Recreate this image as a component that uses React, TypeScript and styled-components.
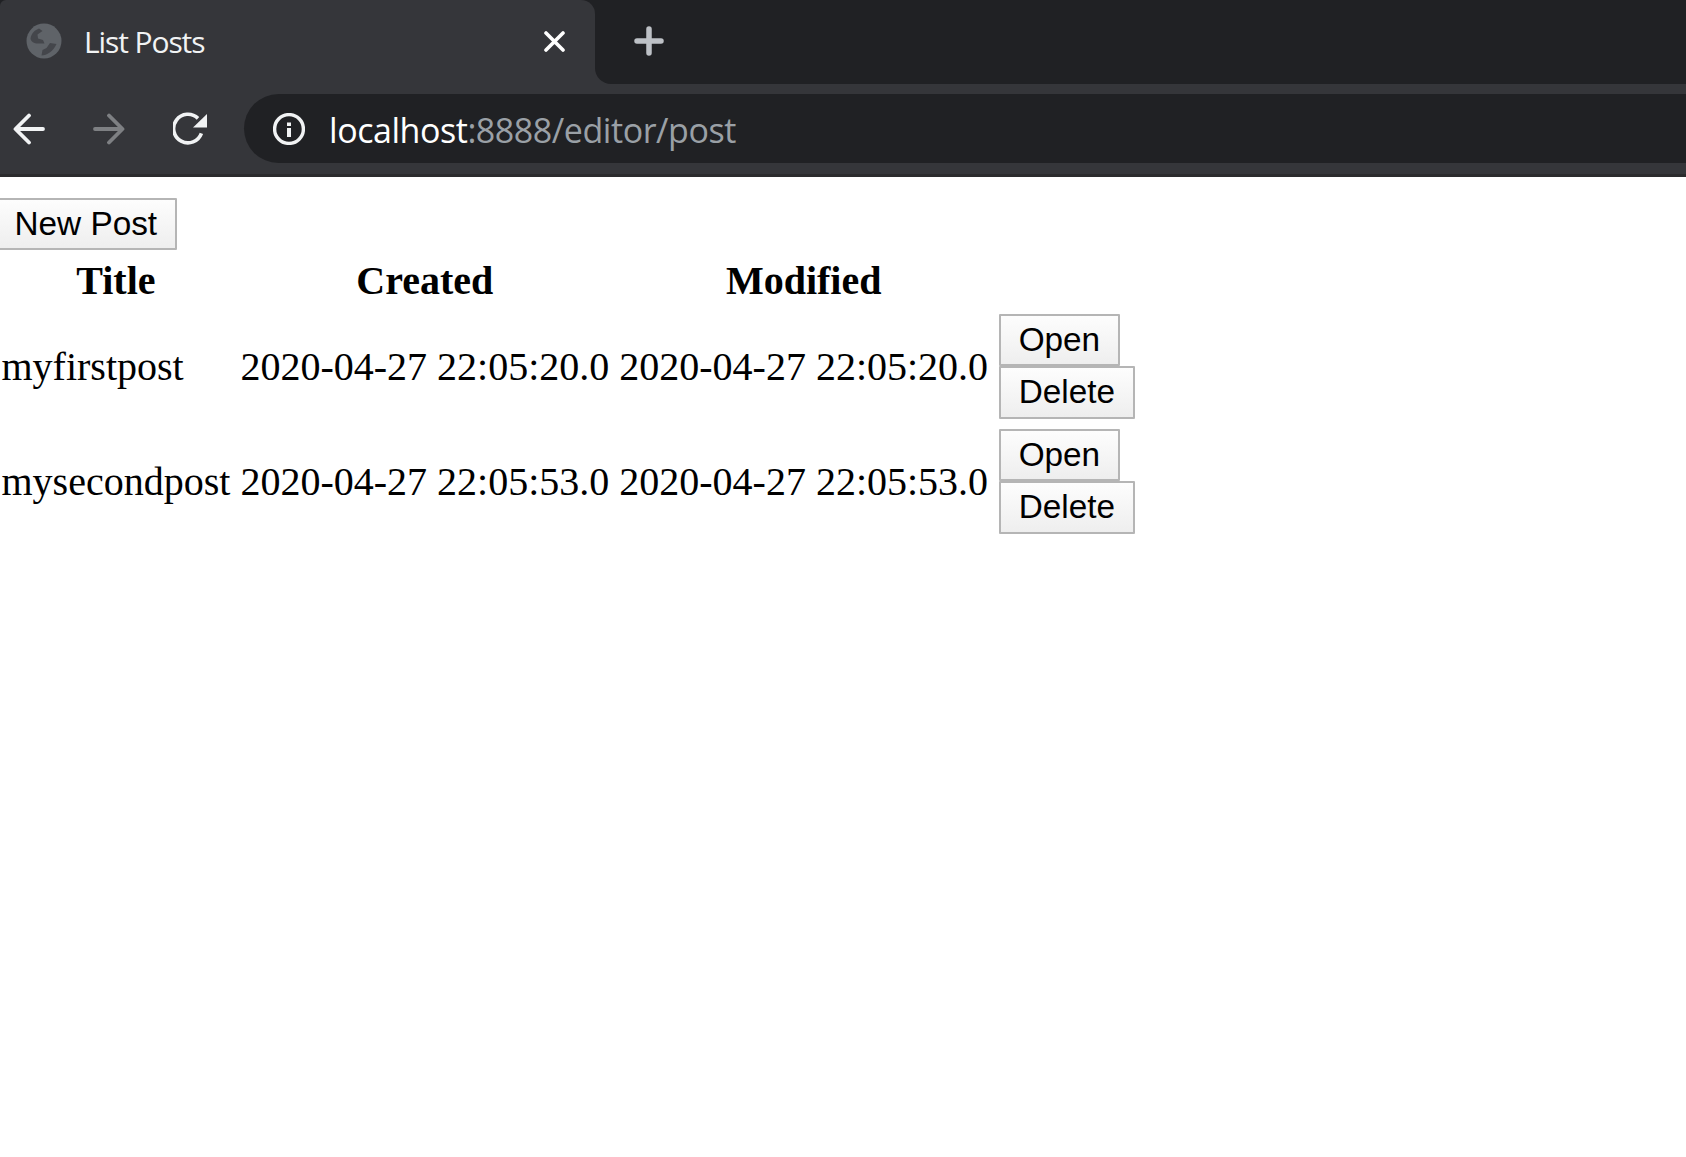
import { FC } from "react";
import styled, { createGlobalStyle } from "styled-components";

const GlobalStyle = createGlobalStyle`
  html, body {
    margin: 0;
    padding: 0;
    background: #fff;
    overflow: hidden;
  }
`;

const Chrome = styled.header`
  display: flex;
  flex-direction: column;
  height: 177px;
  background: #35363a;
  border-bottom: 3px solid #2b2b2d;
  box-sizing: border-box;
`;

const TabStrip = styled.div`
  display: flex;
  height: 84px;
  background: linear-gradient(#202124 50%, #35363a 50%);
`;

const Tab = styled.div`
  display: flex;
  align-items: center;
  width: 595px;
  padding: 0 30px 2px 26px;
  box-sizing: border-box;
  background: #35363a;
  border-radius: 6px 14px 0 0;
`;

const TabTitle = styled.span`
  flex: 1;
  margin-left: 22px;
  font: 30px "Open Sans", sans-serif;
  letter-spacing: -1.1px;
  color: #f1f3f4;
`;

const StripRest = styled.div`
  flex: 1;
  display: flex;
  align-items: center;
  padding: 0 0 2px 39px;
  background: #202124;
  border-radius: 0 0 0 16px;
`;

const Toolbar = styled.div`
  display: flex;
  align-items: center;
  height: 90px;
  padding: 10px 0 11px 13px;
  box-sizing: border-box;
`;

const NavIcons = styled.div`
  display: flex;
  align-items: center;
  gap: 48px;
  margin-right: 37px;
`;

const Omnibox = styled.div`
  flex: 1;
  display: flex;
  align-items: center;
  height: 69px;
  padding-left: 29px;
  background: #202124;
  border-radius: 35px 0 0 35px;
`;

const UrlText = styled.span`
  margin-left: 24px;
  padding-top: 2px;
  font: 34px "Open Sans", sans-serif;
  letter-spacing: -0.45px;
  color: #fff;
`;

const UrlDim = styled.span`
  color: #9aa0a6;
`;

const Page = styled.main`
  padding-top: 20.5px;
  margin-left: -5px;
`;

const Button = styled.button`
  display: block;
  height: 52.5px;
  padding: 0 18px 0 17.5px;
  font: 33.33px "Liberation Sans", Arial, sans-serif;
  color: #000;
  background: linear-gradient(#fdfdfd, #eeeeee);
  border: 2px solid #b5b5b5;
  border-radius: 1px;
`;

const PostTable = styled.table`
  margin-left: -1px;
  border-spacing: 5px;
  font: 40px "Liberation Serif", "Times New Roman", serif;
  color: #000;
`;

const HeadCell = styled.th`
  padding: 2px 2.5px;
  font-weight: bold;
  text-align: center;
`;

const Cell = styled.td`
  padding: 2.5px;
  white-space: nowrap;
`;

const ActionCell = styled(Cell)`
  padding-left: 3.5px;
`;

const posts = [
  { title: "myfirstpost", created: "2020-04-27 22:05:20.0", modified: "2020-04-27 22:05:20.0" },
  { title: "mysecondpost", created: "2020-04-27 22:05:53.0", modified: "2020-04-27 22:05:53.0" },
];

const GlobeIcon: FC = () => (
  <svg width="36" height="36" viewBox="0 0 36 36">
    <circle cx="18" cy="18" r="17.500" fill="#5f6368" />
    <path d="M13 5.500C9 7 5.500 10 4.500 15.500 5 19 8 20.500 12 20.500L18.500 20.500 17 17 12 15.500 11.500 11.500 16.500 8z" fill="#44464b" />
    <path d="M30.500 21L24 20 20.500 25 16.500 27 15.500 32.500C21 32.500 27 28.500 30.500 21z" fill="#44464b" />
  </svg>
);

const CloseIcon: FC = () => (
  <svg width="21" height="21" viewBox="0 0 21 21">
    <path d="M2 2l17 17M19 2L2 19" stroke="#fff" strokeWidth="3.600" strokeLinecap="round" />
  </svg>
);

const PlusIcon: FC = () => (
  <svg width="30" height="30" viewBox="0 0 30 30">
    <path d="M15 3v24M3 15h24" stroke="#bdc1c6" strokeWidth="5.500" strokeLinecap="round" />
  </svg>
);

const ArrowIcon: FC<{ flip?: boolean; color: string }> = ({ flip, color }) => (
  <svg width="32" height="32" viewBox="0 0 32 32" style={flip ? { transform: "scaleX(-1)" } : undefined}>
    <path
      d="M30 16H3M16 2.500L2.500 16 16 29.500"
      fill="none"
      stroke={color}
      strokeWidth="3.800"
      strokeLinecap="round"
      strokeLinejoin="round"
    />
  </svg>
);

const ReloadIcon: FC = () => (
  <svg width="34" height="34" viewBox="0 0 34 34">
    <path d="M25 6.400A14.300 14.300 0 1 0 28.400 21.400" fill="none" stroke="#f1f3f4" strokeWidth="3.600" />
    <path d="M34 2v13.500H20z" fill="#f1f3f4" />
  </svg>
);

const InfoIcon: FC = () => (
  <svg width="32" height="32" viewBox="0 0 32 32">
    <circle cx="16" cy="16" r="14.400" fill="none" stroke="#f1f3f4" strokeWidth="3.400" />
    <path d="M16 15v9M16 9.500v3.500" stroke="#f1f3f4" strokeWidth="4" />
  </svg>
);

export default function App() {
  return (
    <>
      <GlobalStyle />
      <Chrome>
        <TabStrip>
          <Tab>
            <GlobeIcon />
            <TabTitle>List Posts</TabTitle>
            <CloseIcon />
          </Tab>
          <StripRest>
            <PlusIcon />
          </StripRest>
        </TabStrip>
        <Toolbar>
          <NavIcons>
            <ArrowIcon color="#f1f3f4" />
            <ArrowIcon flip color="#7e8083" />
            <ReloadIcon />
          </NavIcons>
          <Omnibox>
            <InfoIcon />
            <UrlText>
              localhost<UrlDim>:8888/editor/post</UrlDim>
            </UrlText>
          </Omnibox>
        </Toolbar>
      </Chrome>
      <Page>
        <Button>New Post</Button>
        <PostTable>
          <thead>
            <tr>
              <HeadCell>Title</HeadCell>
              <HeadCell>Created</HeadCell>
              <HeadCell>Modified</HeadCell>
              <HeadCell />
            </tr>
          </thead>
          <tbody>
            {posts.map(post => (
              <tr key={post.title}>
                <Cell>{post.title}</Cell>
                <Cell>{post.created}</Cell>
                <Cell>{post.modified}</Cell>
                <ActionCell>
                  <Button>Open</Button>
                  <Button>Delete</Button>
                </ActionCell>
              </tr>
            ))}
          </tbody>
        </PostTable>
      </Page>
    </>
  );
}
